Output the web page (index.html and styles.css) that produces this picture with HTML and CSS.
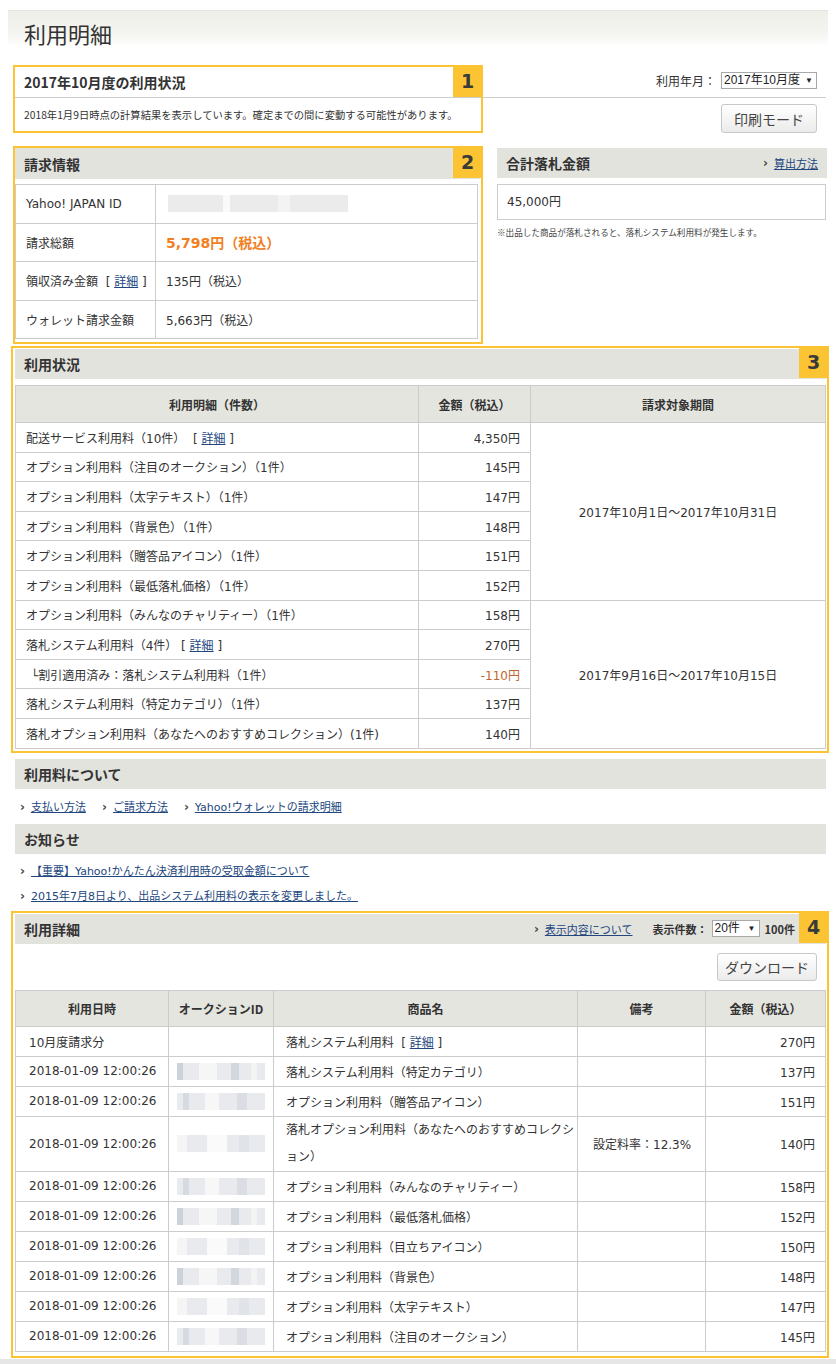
FILE: index.html
```html
<!DOCTYPE html>
<html lang="ja">
<head>
<meta charset="utf-8">
<title>利用明細</title>
<link rel="stylesheet" href="styles.css">
</head>
<body>
<div class="titlebar"><h1 class="title">利用明細</h1></div>
<div class="page">
  <div class="top">
    <div class="frame frame-s1">
      <div class="s1-head">2017年10月度の利用状況</div>
      <div class="s1-note">2018年1月9日時点の計算結果を表示しています。確定までの間に変動する可能性があります。</div>
      <span class="badge">1</span>
    </div>
    <div class="top-right">
      <div class="month-row"><span class="label">利用年月：</span><span class="select sel-month">2017年10月度<span class="arrow">▼</span></span></div>
      <div class="btn-row"><button class="btn btn-print">印刷モード</button></div>
    </div>
  </div>

  <div class="row2">
    <div class="frame frame-s2">
      <div class="band band-s2">請求情報</div>
      <table class="info">
        <colgroup><col class="info-c1"><col></colgroup>
        <tr><td>Yahoo! JAPAN ID</td><td><div class="blur-id"></div></td></tr>
        <tr><td>請求総額</td><td class="total">5,798円（税込）</td></tr>
        <tr><td>領収済み金額 &nbsp;[ <a href="#" class="lnk">詳細</a> ]</td><td>135円（税込）</td></tr>
        <tr><td>ウォレット請求金額</td><td>5,663円（税込）</td></tr>
      </table>
      <span class="badge">2</span>
    </div>
    <div class="summary">
      <div class="band">合計落札金額<span class="band-link"><span class="chev">›</span><a href="#" class="lnk">算出方法</a></span></div>
      <div class="sum-box">45,000円</div>
      <p class="sum-note">※出品した商品が落札されると、落札システム利用料が発生します。</p>
    </div>
  </div>

  <div class="frame frame-wide frame-s3">
    <div class="band">利用状況</div>
    <table class="grid usage">
      <colgroup><col class="u1"><col class="u2"><col class="u3"></colgroup>
      <tr><th>利用明細（件数）</th><th>金額（税込）</th><th>請求対象期間</th></tr>
      <tr><td>配送サービス利用料（10件） &nbsp;[ <a href="#" class="lnk">詳細</a> ]</td><td class="num">4,350円</td><td class="period" rowspan="6">2017年10月1日〜2017年10月31日</td></tr>
      <tr><td>オプション利用料（注目のオークション）（1件）</td><td class="num">145円</td></tr>
      <tr><td>オプション利用料（太字テキスト）（1件）</td><td class="num">147円</td></tr>
      <tr><td>オプション利用料（背景色）（1件）</td><td class="num">148円</td></tr>
      <tr><td>オプション利用料（贈答品アイコン）（1件）</td><td class="num">151円</td></tr>
      <tr><td>オプション利用料（最低落札価格）（1件）</td><td class="num">152円</td></tr>
      <tr><td>オプション利用料（みんなのチャリティー）（1件）</td><td class="num">158円</td><td class="period" rowspan="5">2017年9月16日〜2017年10月15日</td></tr>
      <tr><td>落札システム利用料（4件） [ <a href="#" class="lnk">詳細</a> ]</td><td class="num">270円</td></tr>
      <tr><td class="sub">└割引適用済み：落札システム利用料（1件）</td><td class="num minus">-110円</td></tr>
      <tr><td>落札システム利用料（特定カテゴリ）（1件）</td><td class="num">137円</td></tr>
      <tr><td>落札オプション利用料（あなたへのおすすめコレクション）(1件)</td><td class="num">140円</td></tr>
    </table>
    <span class="badge">3</span>
  </div>

  <div class="band band-plain">利用料について</div>
  <div class="links links-row">
    <span class="li"><span class="chev">›</span><a href="#" class="lnk">支払い方法</a></span>
    <span class="li"><span class="chev">›</span><a href="#" class="lnk">ご請求方法</a></span>
    <span class="li"><span class="chev">›</span><a href="#" class="lnk">Yahoo!ウォレットの請求明細</a></span>
  </div>
  <div class="band band-plain band-news">お知らせ</div>
  <div class="links links-col">
    <span class="li"><span class="chev">›</span><a href="#" class="lnk">【重要】Yahoo!かんたん決済利用時の受取金額について</a></span>
    <span class="li"><span class="chev">›</span><a href="#" class="lnk">2015年7月8日より、出品システム利用料の表示を変更しました。</a></span>
  </div>

  <div class="frame frame-wide frame-s4">
    <div class="band">利用詳細
      <span class="band-tools">
        <span class="chev">›</span><a href="#" class="lnk lnk-plain">表示内容について</a>
        <span class="count-label">表示件数：</span><span class="select sel-count">20件<span class="arrow">▼</span></span>
        <span class="count-label count-max">100件</span>
      </span>
    </div>
    <div class="btn-row btn-row-dl"><button class="btn btn-dl">ダウンロード</button></div>
    <table class="grid detail">
      <colgroup><col class="d1"><col class="d2"><col class="d3"><col class="d4"><col class="d5"></colgroup>
      <tr><th>利用日時</th><th>オークションID</th><th>商品名</th><th>備考</th><th>金額（税込）</th></tr>
      <tr><td class="dt">10月度請求分</td><td></td><td>落札システム利用料 &nbsp;[ <a href="#" class="lnk">詳細</a> ]</td><td></td><td class="num">270円</td></tr>
      <tr><td class="dt">2018-01-09 12:00:26</td><td><div class="blur b1"></div></td><td>落札システム利用料（特定カテゴリ）</td><td></td><td class="num">137円</td></tr>
      <tr><td class="dt">2018-01-09 12:00:26</td><td><div class="blur b2"></div></td><td>オプション利用料（贈答品アイコン）</td><td></td><td class="num">151円</td></tr>
      <tr class="tall"><td class="dt">2018-01-09 12:00:26</td><td><div class="blur b3"></div></td><td class="wrap">落札オプション利用料（あなたへのおすすめコレクシ<br>ョン）</td><td class="note">設定料率：12.3%</td><td class="num">140円</td></tr>
      <tr><td class="dt">2018-01-09 12:00:26</td><td><div class="blur b2"></div></td><td>オプション利用料（みんなのチャリティー）</td><td></td><td class="num">158円</td></tr>
      <tr><td class="dt">2018-01-09 12:00:26</td><td><div class="blur b1"></div></td><td>オプション利用料（最低落札価格）</td><td></td><td class="num">152円</td></tr>
      <tr><td class="dt">2018-01-09 12:00:26</td><td><div class="blur b3"></div></td><td>オプション利用料（目立ちアイコン）</td><td></td><td class="num">150円</td></tr>
      <tr><td class="dt">2018-01-09 12:00:26</td><td><div class="blur b1"></div></td><td>オプション利用料（背景色）</td><td></td><td class="num">148円</td></tr>
      <tr><td class="dt">2018-01-09 12:00:26</td><td><div class="blur b3"></div></td><td>オプション利用料（太字テキスト）</td><td></td><td class="num">147円</td></tr>
      <tr><td class="dt">2018-01-09 12:00:26</td><td><div class="blur b2"></div></td><td>オプション利用料（注目のオークション）</td><td></td><td class="num">145円</td></tr>
    </table>
    <span class="badge">4</span>
  </div>
</div>
<div class="footer"></div>
</body>
</html>
```
FILE: styles.css
```css
* { box-sizing: border-box; }

body {
  margin: 0;
  background: #fff;
  color: #333;
  font-family: "DejaVu Sans", "Noto Sans CJK JP", sans-serif;
  font-size: 12px;
}

a { color: #264c86; }

.titlebar {
  margin: 10px 8px 0;
  height: 35px;
  border-top: 1px solid #e4e4df;
  background: linear-gradient(#efefea, #f3f3ef 60%, #fdfdfc);
}
.title {
  margin: 0;
  padding: 11px 0 0 16px;
  font-family: "Noto Sans CJK JP", sans-serif;
  font-weight: normal;
  font-size: 22px;
  line-height: 22px;
  color: #333;
}

.page {
  padding: 20px 7px 0 11px;
}

.frame {
  position: relative;
  border: 2px solid #fcc433;
}

.badge {
  position: absolute;
  top: -1px;
  right: -1px;
  width: 29px;
  height: 31px;
  background: #fcc433;
  color: #3a3a3a;
  font-family: "DejaVu Sans", sans-serif;
  font-weight: bold;
  font-size: 19px;
  line-height: 31px;
  text-align: center;
}

/* top section */
.top {
  display: flex;
  margin-left: 2px;
}
.frame-s1 {
  width: 470px;
  height: 68px;
}
.s1-head {
  height: 31px;
  border-bottom: 1px solid #ccc;
  padding-left: 9px;
  font-family: "Noto Sans CJK JP", sans-serif;
  font-weight: bold;
  font-size: 14px;
  line-height: 30px;
}
.s1-note {
  padding-left: 9px;
  font-family: "Noto Sans CJK JP", sans-serif;
  font-size: 10.3px;
  line-height: 33px;
  white-space: nowrap;
}
.top-right {
  flex: 1;
  margin-right: 3px;
  padding-top: 2px;
}
.month-row {
  height: 31px;
  border-bottom: 1px solid #ccc;
  display: flex;
  justify-content: flex-end;
  align-items: flex-start;
  padding: 5px 9px 0 0;
}
.label {
  font-family: "Noto Sans CJK JP", sans-serif;
  font-size: 12px;
  line-height: 17px;
  margin-right: 5px;
}
.select {
  display: inline-flex;
  align-items: center;
  justify-content: space-between;
  height: 17px;
  border: 1px solid #a8a8a8;
  padding: 0 3px 0 2px;
  font-family: "Liberation Sans", "Noto Sans CJK JP", sans-serif;
  font-size: 12px;
  line-height: 15px;
  color: #222;
  background: #fff;
  white-space: nowrap;
}
.sel-month { width: 96px; }
.arrow { font-size: 8px; color: #222; }

.btn-row {
  display: flex;
  justify-content: flex-end;
  padding-right: 9px;
  margin-top: 6px;
}
.btn {
  height: 29px;
  border: 1px solid #c8c8c8;
  border-radius: 3px;
  background: linear-gradient(#ffffff, #ebebeb);
  font-family: "Noto Sans CJK JP", sans-serif;
  font-size: 14px;
  color: #444;
  padding: 0;
}
.btn-print { width: 96px; }
.btn-dl { width: 100px; height: 28px; }
.btn-row-dl { margin-top: 9px; }

/* bands */
.band {
  display: flex;
  align-items: center;
  justify-content: space-between;
  height: 30px;
  padding: 0 9px;
  background: #e3e3de;
  font-family: "Noto Sans CJK JP", sans-serif;
  font-weight: bold;
  font-size: 14px;
}
.band-link, .band-tools {
  display: flex;
  align-items: center;
  font-weight: normal;
  font-size: 11px;
}
.chev {
  color: #444;
  font-weight: bold;
  font-size: 12px;
  margin-right: 6px;
  font-family: "DejaVu Sans", sans-serif;
}
.lnk { color: #22467e; text-decoration: underline; }

/* section 2 */
.row2 {
  display: flex;
  align-items: flex-start;
  margin: 13px 2px 0;
}
.frame-s2 {
  width: 470px;
  height: 198px;
}
.band-s2 { height: 31px; margin-right: 1px; }
.info {
  width: 463px;
  margin-top: 5px;
  border-collapse: collapse;
  table-layout: fixed;
}
.info-c1 { width: 140px; }
.info td {
  height: 38.5px;
  border: 1px solid #ccc;
  padding: 0 2px 0 10px;
  font-size: 12px;
  white-space: nowrap;
}
.info .total {
  color: #f08022;
  font-weight: bold;
  font-size: 14px;
  font-family: "DejaVu Sans", "Noto Sans CJK JP", sans-serif;
}
.blur-id {
  width: 180px;
  height: 17px;
  margin-left: 2px;
  background:
    linear-gradient(90deg, transparent 0 55px, #fafafa 55px 62px, transparent 62px 110px, #f3f3f3 110px 122px, transparent 122px),
    #ebebeb;
}

.summary {
  width: 330px;
  margin: 2px 0 0 14px;
}
.sum-box {
  margin-top: 6px;
  height: 36px;
  border: 1px solid #ccc;
  padding-left: 9px;
  line-height: 34px;
  font-size: 12px;
  width: 329px;
}
.sum-note {
  margin: 6px 0 0;
  font-family: "Noto Sans CJK JP", sans-serif;
  font-size: 8.6px;
  color: #444;
}

/* section 3 */
.frame-wide {
  padding: 1px 1px 2px 2px;
}
.frame-s3 { margin-top: 2px; }
.grid {
  width: 100%;
  border-collapse: collapse;
  table-layout: fixed;
  margin-top: 6px;
}
.grid th {
  height: 37px;
  background: #e5e5e0;
  border: 1px solid #ccc;
  font-family: "Noto Sans CJK JP", sans-serif;
  font-weight: bold;
  font-size: 12px;
  text-align: center;
}
.grid td {
  border: 1px solid #ccc;
  padding: 0 10px;
  font-size: 12px;
  white-space: nowrap;
}
.usage td { height: 29.6px; }
.u1 { width: 403px; }
.u2 { width: 112px; }
.num { text-align: right; }
.period { text-align: center; }
.sub { padding-left: 15px !important; }
.minus { color: #c0662a; }

/* links */
.band-plain { margin: 6px 3px 0 4px; }
.links {
  margin: 0 3px 0 4px;
  font-family: "DejaVu Sans", "Noto Sans CJK JP", sans-serif;
  font-size: 11px;
}
.links-row {
  height: 35px;
  display: flex;
  align-items: center;
  gap: 16px;
  padding-left: 5px;
}
.links-col {
  display: flex;
  flex-direction: column;
  padding: 5px 0 2px 5px;
}
.links-col .li { line-height: 25px; }
.band-news { margin-top: 0; }

/* section 4 */
.frame-s4 { margin-top: 0; padding-bottom: 4px; }
.lnk-plain { margin-right: 20px; }
.count-label {
  font-weight: bold;
  color: #333;
  font-size: 11px;
  white-space: nowrap;
}
.count-max { margin-right: 22px; }
.sel-count {
  width: 48px;
  margin: 0 5px 0 4px;
  font-size: 12px;
}
.detail { margin-top: 9px; }
.detail th { height: 36px; }
.detail td { height: 30px; }
.detail tr.tall td { height: 55px; }
.d1 { width: 153px; }
.d2 { width: 105px; }
.d3 { width: 304px; }
.d4 { width: 128px; }
.detail td.dt { padding-left: 13px; }
.detail td:nth-child(2) { padding: 0 0 0 8px; }
.detail td:nth-child(3) { padding-left: 12px; }
.detail td.wrap { line-height: 27px; }
.detail td.note { padding-left: 15px; }

.blur {
  width: 88px;
  height: 17px;
  background-color: #e9eaed;
}
.b1 {
  background-image: linear-gradient(90deg, #cdd2da 0 6px, transparent 6px 22px, #f6f6f7 22px 40px, transparent 40px 54px, #d3d7de 54px 62px, transparent 62px 74px, #f3f3f4 74px 80px, transparent 80px);
}
.b2 {
  background-image: linear-gradient(90deg, transparent 0 6px, #d6dae1 6px 12px, transparent 12px 28px, #f7f7f8 28px 42px, transparent 42px 60px, #dadde3 60px 70px, transparent 70px);
}
.b3 {
  background-image: linear-gradient(90deg, #f5f5f6 0 10px, transparent 10px 30px, #fafafa 30px 50px, transparent 50px 62px, #e0e3e8 62px 72px, transparent 72px);
}

.footer {
  margin-top: 1px;
  height: 10px;
  background: #e6e6e6;
}
```
